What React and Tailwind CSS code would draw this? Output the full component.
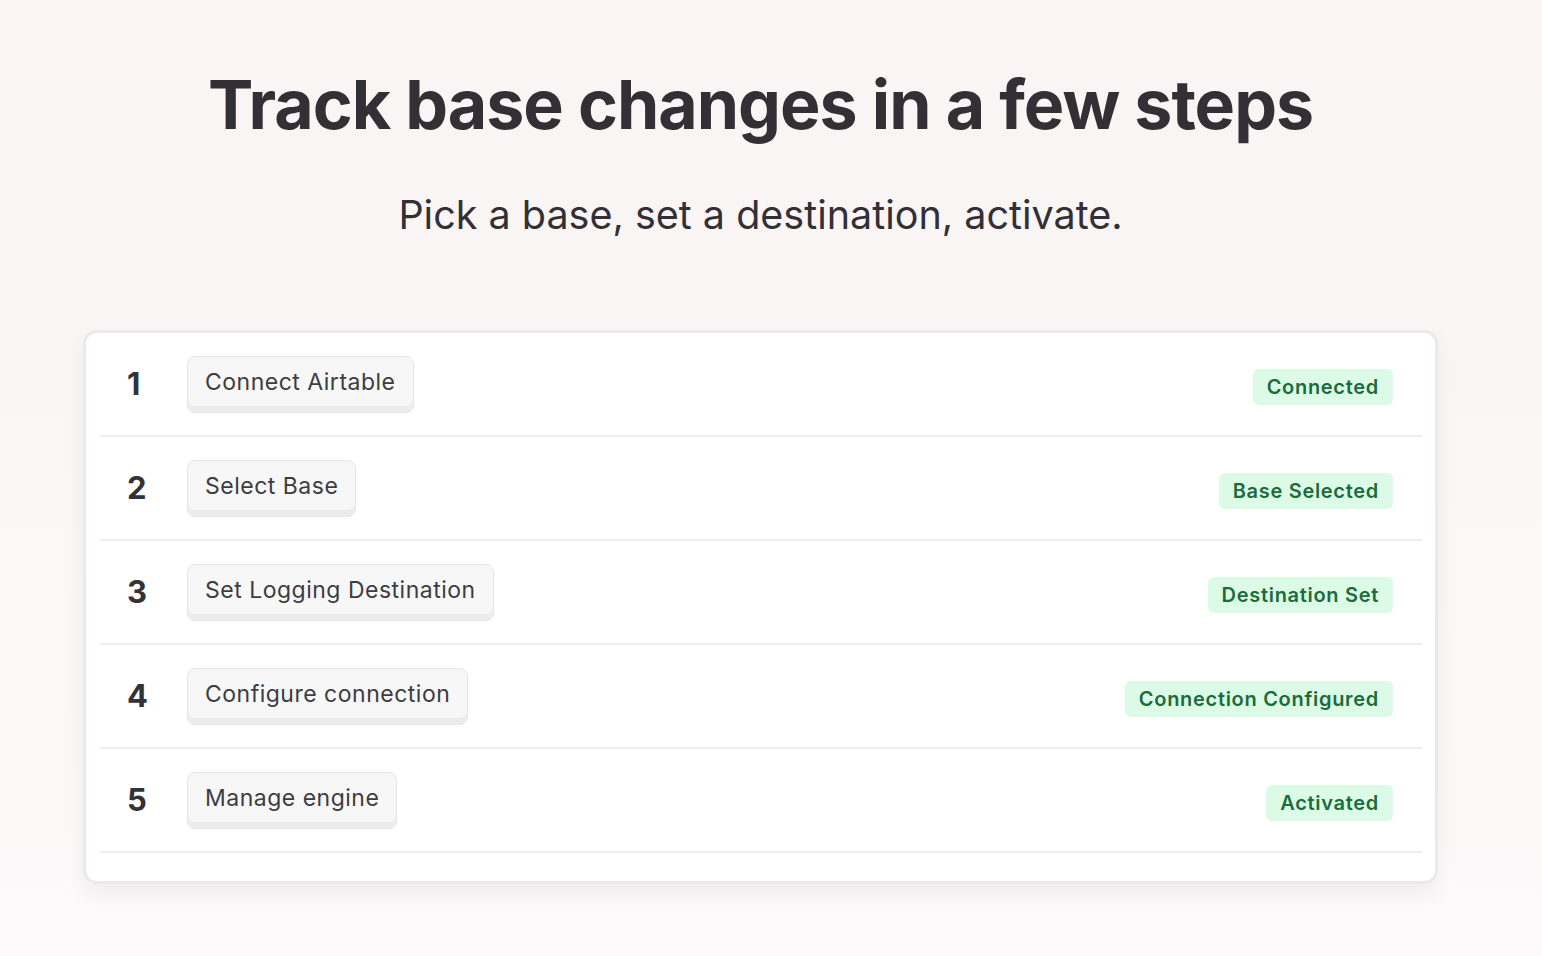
import React from 'react';

const steps = [
  { n: 1, action: 'Connect Airtable', status: 'Connected' },
  { n: 2, action: 'Select Base', status: 'Base Selected' },
  { n: 3, action: 'Set Logging Destination', status: 'Destination Set' },
  { n: 4, action: 'Configure connection', status: 'Connection Configured' },
  { n: 5, action: 'Manage engine', status: 'Activated' },
];

function StepRow({ step }) {
  return (
    <div className="flex h-[104px] items-center border-b-2 border-[#f0efef] pl-[28px] pr-[29px]">
      <span className="w-[60px] text-[31px] font-bold text-[#333236]">{step.n}</span>
      <button className="h-[57px] rounded-[8px] border border-[#e6e6e6] bg-[#f7f7f7] px-[17px] pb-[3px] text-[23px] tracking-[0.5px] text-[#3d3c3f] shadow-[inset_0_-6px_0_#ececec]">
        {step.action}
      </button>
      <span className="ml-auto mt-[6px] rounded-[6px] bg-[#dcfbe6] px-[14px] py-[3px] text-[20px] font-semibold tracking-[0.7px] text-[#1c6b3c]">
        {step.status}
      </span>
    </div>
  );
}

export default function App() {
  return (
    <div
      className="min-h-[956px] bg-gradient-to-b from-[#faf4f4] to-[#fcfafa] pr-[21px] pt-[66px]"
      style={{ fontFamily: 'Inter, "Noto Sans", sans-serif' }}
    >
      <h1 className="text-center text-[68px] font-bold leading-[76px] tracking-[-1px] text-[#333035]">
        Track base changes in a few steps
      </h1>
      <p className="mt-[48px] text-center text-[39.5px] leading-[50px] text-[#333035]">
        Pick a base, set a destination, activate.
      </p>
      <div className="mx-auto mt-[90px] w-[1355px] rounded-[14px] border-[3px] border-[#ebe9e9] bg-white px-[13px] pb-[28px] shadow-[0_10px_24px_rgba(0,0,0,0.06)]">
        {steps.map((s) => (
          <StepRow key={s.n} step={s} />
        ))}
      </div>
    </div>
  );
}
